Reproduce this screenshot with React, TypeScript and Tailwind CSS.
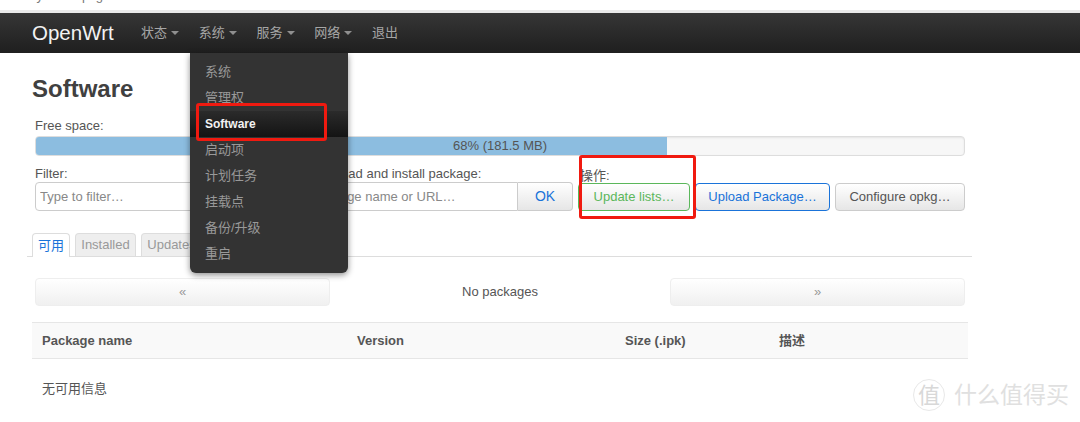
const CJK_FONT = "font-['Liberation_Sans','Noto_Sans_CJK_SC',sans-serif]";

const NAV_ITEMS = [
  { label: "状态", caret: true },
  { label: "系统", caret: true },
  { label: "服务", caret: true },
  { label: "网络", caret: true },
  { label: "退出", caret: false },
];

const MENU_ABOVE = ["系统", "管理权"];
const MENU_BELOW = ["启动项", "计划任务", "挂载点", "备份/升级", "重启"];

const BTN =
  "h-[28px] rounded-[4px] border text-[13px] bg-gradient-to-b from-white to-[#e6e6e6] flex items-center justify-center";

function DropdownMenu() {
  return (
    <div className="absolute left-[190px] top-[53px] w-[158px] h-[220px] bg-[#333333] rounded-b-[6px] shadow-[0_2px_6px_rgba(0,0,0,0.45)] pt-[6px] text-[13px] text-[#999999]">
      {MENU_ABOVE.map((item) => (
        <div key={item} className="h-[26px] pl-[15px] flex items-center">
          {item}
        </div>
      ))}
      <div className="h-[26px] pl-[15px] flex items-center text-[12px] font-bold text-[#f2f2f2] bg-gradient-to-b from-[#2b2b2b] to-[#141414]">
        Software
      </div>
      {MENU_BELOW.map((item) => (
        <div key={item} className="h-[26px] pl-[15px] flex items-center">
          {item}
        </div>
      ))}
    </div>
  );
}

function Watermark() {
  return (
    <div className="absolute left-[913px] top-[379px] flex items-center text-[#e0e0e0]">
      <div className="w-[32px] h-[32px] rounded-full border border-[#e8e8e8] flex items-center justify-center text-[22px] text-[#d8d8d8]">
        值
      </div>
      <span className="ml-[9px] text-[23px] leading-none">什么值得买</span>
    </div>
  );
}

export default function App() {
  return (
    <div className={`relative w-[1080px] h-[422px] overflow-hidden bg-white text-[#555555] ${CJK_FONT}`}>
      {/* clipped browser text above the capture */}
      <div className="h-[10px] overflow-hidden pl-[30px]">
        <div className="-mt-[11px] text-[13px] leading-[14px] text-[#777777]">system/opkg</div>
      </div>
      <div className="h-[3px] bg-[#e9e9e9]" />

      {/* Navbar */}
      <div className="h-[40px] bg-gradient-to-b from-[#363636] to-[#1f1f1f] flex items-center pl-[32px]">
        <span className="text-[20.5px] text-[#f2f2f2] mr-[22px] w-[87px]">OpenWrt</span>
        <div className="flex gap-[19.75px] text-[13px] text-[#a6a6a6]">
          {NAV_ITEMS.map((item) => (
            <div key={item.label} className="flex items-center gap-[4px]">
              {item.label}
              {item.caret && (
                <span className="w-0 h-0 border-x-[4px] border-x-transparent border-t-[4px] border-t-[#8f8f8f]" />
              )}
            </div>
          ))}
        </div>
      </div>

      {/* Main content */}
      <div className="pl-[32px] w-[1000px]">
        <h1 className="mt-[22px] h-[28px] text-[24px] leading-[28px] font-bold text-[#404040]">Software</h1>

        <div className="pl-[3px] w-[933px]">
          <div className="mt-[14px] h-[17px] text-[13px] leading-[17px] text-[#555555]">Free space:</div>
          <div className="relative mt-[2px] h-[20px] rounded-[4px] border border-[#dddddd] bg-[#f7f7f7] shadow-[inset_0_1px_2px_rgba(0,0,0,0.08)]">
            <div className="h-full w-[68%] bg-[#8cbde0] rounded-l-[3px]" />
            <div className="absolute inset-0 flex items-center justify-center text-[13px] text-[#555555]">
              68% (181.5 MB)
            </div>
          </div>

          <div className="mt-[10px] flex">
            <div className="w-[264px] shrink-0">
              <div className="h-[16px] text-[13px] leading-[15px]">Filter:</div>
              <input
                readOnly
                placeholder="Type to filter…"
                className="w-full h-[29px] rounded-[4px] border border-[#cccccc] bg-white px-[4px] text-[13px] placeholder:text-[#888888] outline-none"
              />
            </div>
            <div className="ml-[6px] w-[268px] shrink-0">
              <div className="h-[16px] text-[13px] leading-[15px] whitespace-nowrap">Download and install package:</div>
              <div className="flex">
                <input
                  readOnly
                  placeholder="Package name or URL…"
                  className="min-w-0 flex-1 h-[29px] rounded-l-[4px] border border-[#cccccc] bg-white px-[5px] text-[13px] placeholder:text-[#888888] outline-none"
                />
                <button className={`${BTN} !h-[29px] w-[55px] !rounded-l-none border-l-0 border-[#cccccc] text-[#1a73d9] !text-[14px]`}>
                  OK
                </button>
              </div>
            </div>
            <div className="ml-[5px] flex-1 min-w-0">
              <div className="h-[16px] pl-[2px] pt-[2px] text-[13px] leading-[15px]">操作:</div>
              <div className="mt-[1px] flex gap-[5px]">
                <button className={`${BTN} w-[112px] border-[#5bb75b] text-[#5bb75b]`}>Update lists…</button>
                <button className={`${BTN} w-[135px] border-[#1a73d9] text-[#1a73d9]`}>Upload Package…</button>
                <button className={`${BTN} w-[130px] border-[#cccccc] text-[#555555]`}>Configure opkg…</button>
              </div>
            </div>
          </div>
        </div>

        {/* Tabs */}
        <div className="mt-[22px] -ml-[5px] w-[945px] h-[24px] border-b border-[#dddddd] pl-[5px] flex gap-[5px] text-[13px]">
          <div className="w-[38px] h-[24px] rounded-t-[4px] border border-b-0 border-[#dddddd] bg-white text-[#1a73d9] flex items-center justify-center">
            可用
          </div>
          <div className="w-[61px] h-[23px] rounded-t-[4px] border border-b-0 border-[#dddddd] bg-[#eeeeee] text-[#999999] flex items-center justify-center">
            Installed
          </div>
          <div className="w-[61px] h-[23px] rounded-t-[4px] border border-b-0 border-[#dddddd] bg-[#eeeeee] text-[#999999] flex items-center justify-center">
            Updates
          </div>
        </div>

        {/* Pager */}
        <div className="mt-[21px] ml-[3px] w-[930px] flex items-center">
          <div className="w-[295px] h-[28px] rounded-[4px] border border-[#eeeeee] bg-gradient-to-b from-white to-[#f0f0f0] text-[13px] text-[#999999] flex items-center justify-center">
            «
          </div>
          <div className="flex-1 text-center text-[13px] text-[#555555]">No packages</div>
          <div className="w-[295px] h-[28px] rounded-[4px] border border-[#eeeeee] bg-gradient-to-b from-white to-[#f0f0f0] text-[13px] text-[#999999] flex items-center justify-center">
            »
          </div>
        </div>

        {/* Table */}
        <div className="mt-[16px] w-[936px] h-[37px] border-y border-[#e6e6e6] bg-[#f9f9f9] flex items-center pl-[10px] text-[13px] font-bold text-[#555555]">
          <div className="w-[315px]">Package name</div>
          <div className="w-[268px]">Version</div>
          <div className="w-[154px]">Size (.ipk)</div>
          <div>描述</div>
        </div>
        <div className="mt-[21px] pl-[10px] text-[13px] leading-[18px] text-[#555555]">无可用信息</div>
      </div>

      <DropdownMenu />

      {/* Red annotation boxes */}
      <div className="absolute left-[196px] top-[103px] w-[131px] h-[38px] rounded-[3px] border-[3px] border-[#f01a10]" />
      <div className="absolute left-[579px] top-[155px] w-[117px] h-[64px] rounded-[3px] border-[3px] border-[#f01a10]" />

      <Watermark />
    </div>
  );
}
